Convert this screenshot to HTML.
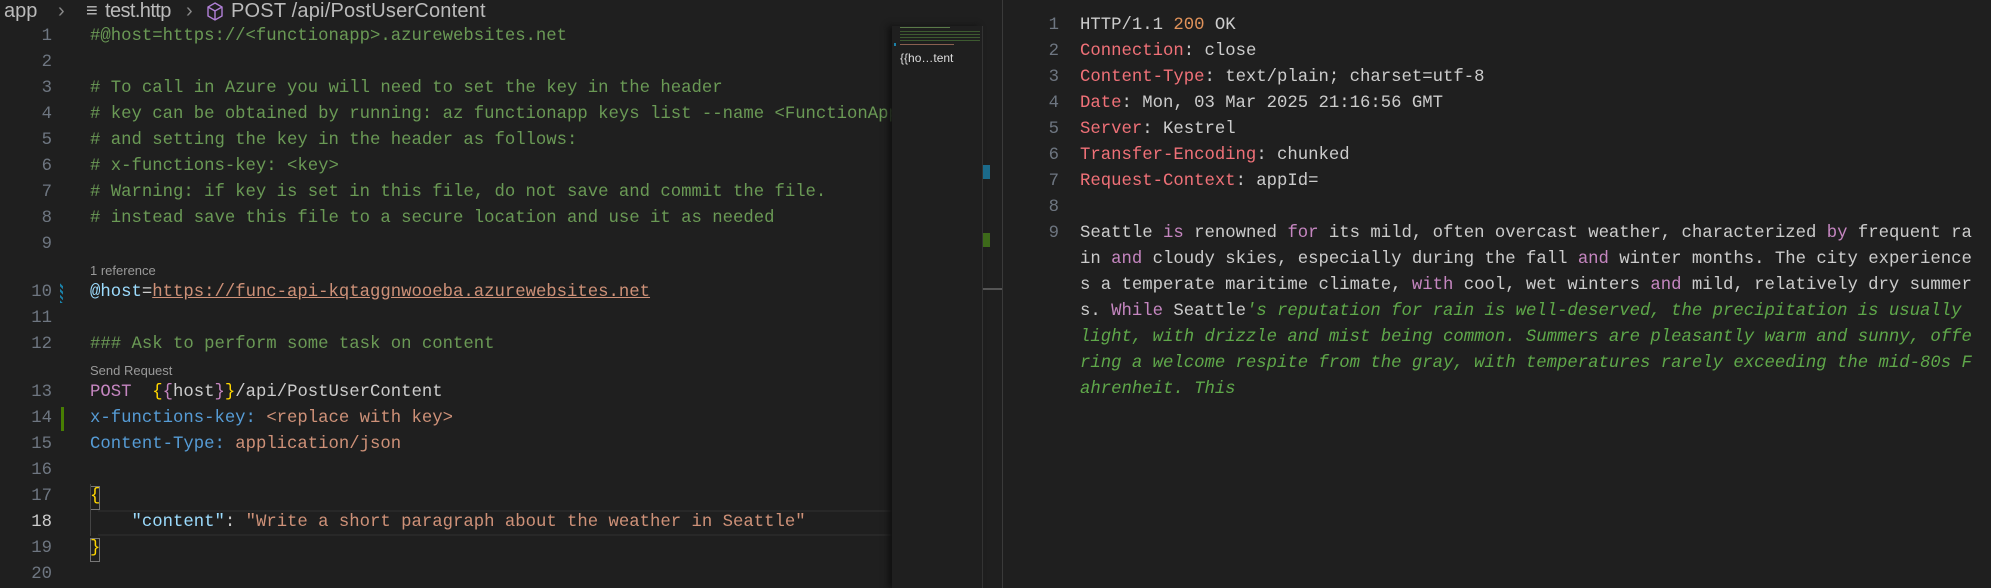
<!DOCTYPE html>
<html><head><meta charset="utf-8"><style>
html,body{margin:0;padding:0;width:1991px;height:588px;background:#1f1f1f;overflow:hidden;position:relative}
.m{font-family:"Liberation Mono",monospace;font-size:17.3px;white-space:pre;position:absolute;line-height:26px}
.s{font-family:"Liberation Sans",sans-serif;position:absolute;white-space:pre}
.bc{font-family:"Liberation Sans",sans-serif;position:absolute;white-space:pre;font-size:20px;color:#bbb;top:-2px;line-height:26px}
.ln{position:absolute;width:52px;text-align:right;color:#6e7681}
.rn{position:absolute;width:56px;text-align:right;color:#6e7681}
.c{color:#6a9955}.o{color:#ce9178}.b{color:#9cdcfe}.k{color:#569cd6}.p{color:#c586c0}.y{color:#ffd700}.w{color:#cccccc}.h{color:#f07178}.g{color:#5fa84a;font-style:italic}
</style></head><body>
<div class="bc" style="left:4px">app</div>
<div class="bc" style="left:58px;color:#888">›</div>
<div class="bc" style="left:86px">≡</div>
<div class="bc" style="left:105px;letter-spacing:-0.6px">test.http</div>
<div class="bc" style="left:186px;color:#888">›</div>
<svg style="position:absolute;left:205px;top:1px" width="20" height="22" viewBox="0 0 20 22"><path d="M10 2 L17 6 L17 15 L10 19 L3 15 L3 6 Z M3 6 L10 10 L17 6 M10 10 L10 19" fill="none" stroke="#b180d7" stroke-width="1.4"/></svg>
<div class="bc" style="left:231px;letter-spacing:0.2px">POST /api/PostUserContent</div>

<div class="m" style="left:0;top:24px;width:892px;height:564px;overflow:hidden">
<div class="ln m" style="top:0">1</div><div class="m c" style="left:90px;top:0">#@host=https://&lt;functionapp&gt;.azurewebsites.net</div>
<div class="ln m" style="top:26px">2</div>
<div class="ln m" style="top:52px">3</div><div class="m c" style="left:90px;top:52px"># To call in Azure you will need to set the key in the header</div>
<div class="ln m" style="top:78px">4</div><div class="m c" style="left:90px;top:78px"># key can be obtained by running: az functionapp keys list --name &lt;FunctionApp&gt;</div>
<div class="ln m" style="top:104px">5</div><div class="m c" style="left:90px;top:104px"># and setting the key in the header as follows:</div>
<div class="ln m" style="top:130px">6</div><div class="m c" style="left:90px;top:130px"># x-functions-key: &lt;key&gt;</div>
<div class="ln m" style="top:156px">7</div><div class="m c" style="left:90px;top:156px"># Warning: if key is set in this file, do not save and commit the file.</div>
<div class="ln m" style="top:182px">8</div><div class="m c" style="left:90px;top:182px"># instead save this file to a secure location and use it as needed</div>
<div class="ln m" style="top:208px">9</div>
<div class="s" style="left:90px;top:234px;font-size:13px;color:#999">1 reference</div>
<div class="ln m" style="top:256px">10</div><div style="position:absolute;left:60px;top:259px;width:3px;height:20px;background:repeating-linear-gradient(45deg,#1b81a8 0 2px,transparent 2px 4px)"></div>
<div class="m" style="left:90px;top:256px"><span class="b">@host</span><span class="w">=</span><span class="o" style="text-decoration:underline">https://func-api-kqtaggnwooeba.azurewebsites.net</span></div>
<div class="ln m" style="top:282px">11</div>
<div class="ln m" style="top:308px">12</div><div class="m c" style="left:90px;top:308px">### Ask to perform some task on content</div>
<div class="s" style="left:90px;top:334px;font-size:13px;color:#999">Send Request</div>
<div class="ln m" style="top:356px">13</div><div class="m" style="left:90px;top:356px"><span class="p">POST</span>  <span class="y">{</span><span class="p">{</span><span class="w">host</span><span class="p">}</span><span class="y">}</span><span class="w">/api/PostUserContent</span></div>
<div class="ln m" style="top:382px">14</div><div style="position:absolute;left:61px;top:383px;width:3px;height:24px;background:#487e02"></div>
<div class="m" style="left:90px;top:382px"><span class="k">x-functions-key:</span> <span class="o">&lt;replace with key&gt;</span></div>
<div class="ln m" style="top:408px">15</div><div class="m" style="left:90px;top:408px"><span class="k">Content-Type:</span> <span class="o">application/json</span></div>
<div class="ln m" style="top:434px">16</div>
<div class="ln m" style="top:460px">17</div><div style="position:absolute;left:90px;top:462px;width:8px;height:22px;border:1px solid #777"></div><div class="m y" style="left:90px;top:460px">{</div>
<div style="position:absolute;left:98px;top:486px;width:800px;height:22px;border-top:2px solid #282828;border-bottom:2px solid #282828"></div>
<div class="ln m" style="top:486px;color:#ccc">18</div><div class="m" style="left:90px;top:486px">    <span class="b">"content"</span><span class="w">:</span> <span class="o">"Write a short paragraph about the weather in Seattle"</span></div>
<div style="position:absolute;left:90px;top:460px;width:1px;height:52px;background:#444"></div>
<div class="ln m" style="top:512px">19</div><div style="position:absolute;left:90px;top:514px;width:8px;height:22px;border:1px solid #777"></div><div class="m y" style="left:90px;top:512px">}</div>
<div class="ln m" style="top:538px">20</div>
</div>

<div style="position:absolute;left:892px;top:26px;width:90px;height:562px;background:#1f1f1f;box-shadow:-4px 0 6px #111"></div>
<div style="position:absolute;left:900px;top:27px;width:50px;height:1px;background:#5a7a48"></div>
<div style="position:absolute;left:900px;top:31px;width:80px;height:10px;background:repeating-linear-gradient(#3d5a30 0 1px,transparent 1px 3px)"></div>
<div style="position:absolute;left:900px;top:44px;width:54px;height:1px;background:#8a6050"></div>
<div style="position:absolute;left:894px;top:43px;width:2px;height:3px;background:#1b81a8"></div>
<div class="s" style="left:900px;top:51px;font-size:12px;color:#ddd">{{ho…tent</div>
<div style="position:absolute;left:982px;top:26px;width:1px;height:562px;background:#333"></div>
<div style="position:absolute;left:983px;top:165px;width:7px;height:14px;background:#1b6a8a"></div>
<div style="position:absolute;left:983px;top:233px;width:7px;height:14px;background:#3d6a1a"></div>
<div style="position:absolute;left:983px;top:288px;width:19px;height:2px;background:#555"></div>
<div style="position:absolute;left:1002px;top:0;width:1px;height:588px;background:#3a3a3a"></div>

<div class="m" style="left:1003px;top:13px;width:988px;height:575px;overflow:hidden">
<div class="rn m" style="top:0">1</div><div class="m w" style="left:77px;top:0">HTTP/1.1 <span style="color:#e0925a">200</span> OK</div>
<div class="rn m" style="top:26px">2</div><div class="m w" style="left:77px;top:26px"><span class="h">Connection</span>: close</div>
<div class="rn m" style="top:52px">3</div><div class="m w" style="left:77px;top:52px"><span class="h">Content-Type</span>: text/plain; charset=utf-8</div>
<div class="rn m" style="top:78px">4</div><div class="m w" style="left:77px;top:78px"><span class="h">Date</span>: Mon, 03 Mar 2025 21:16:56 GMT</div>
<div class="rn m" style="top:104px">5</div><div class="m w" style="left:77px;top:104px"><span class="h">Server</span>: Kestrel</div>
<div class="rn m" style="top:130px">6</div><div class="m w" style="left:77px;top:130px"><span class="h">Transfer-Encoding</span>: chunked</div>
<div class="rn m" style="top:156px">7</div><div class="m w" style="left:77px;top:156px"><span class="h">Request-Context</span>: appId=</div>
<div class="rn m" style="top:182px">8</div>
<div class="rn m" style="top:208px">9</div>
<div class="m w" style="left:77px;top:208px">Seattle <span class="p">is</span> renowned <span class="p">for</span> its mild, often overcast weather, characterized <span class="p">by</span> frequent ra</div>
<div class="m w" style="left:77px;top:234px">in <span class="p">and</span> cloudy skies, especially during the fall <span class="p">and</span> winter months. The city experience</div>
<div class="m w" style="left:77px;top:260px">s a temperate maritime climate, <span class="p">with</span> cool, wet winters <span class="p">and</span> mild, relatively dry summer</div>
<div class="m w" style="left:77px;top:286px">s. <span class="p">While</span> Seattle<span class="g">'s reputation for rain is well-deserved, the precipitation is usually</span></div>
<div class="m g" style="left:77px;top:312px">light, with drizzle and mist being common. Summers are pleasantly warm and sunny, offe</div>
<div class="m g" style="left:77px;top:338px">ring a welcome respite from the gray, with temperatures rarely exceeding the mid-80s F</div>
<div class="m g" style="left:77px;top:364px">ahrenheit. This</div>
</div>
</body></html>
